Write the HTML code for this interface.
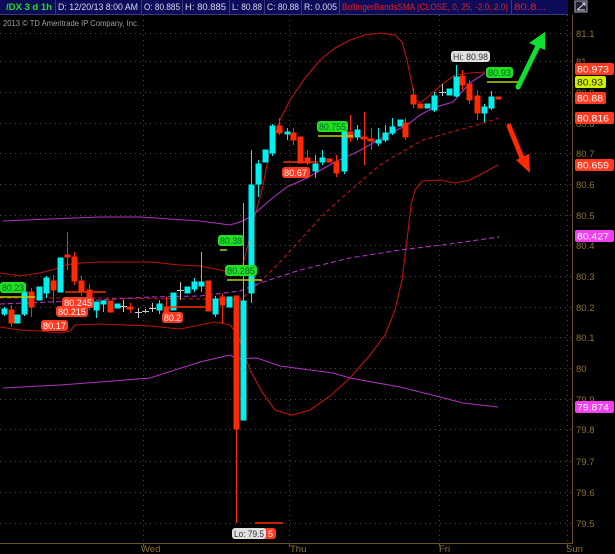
<!DOCTYPE html>
<html><head><meta charset="utf-8"><style>
html,body{margin:0;padding:0;background:#000;}
body{width:615px;height:554px;overflow:hidden;position:relative;font-family:"Liberation Sans",sans-serif;}
svg{position:absolute;left:0;top:0;}
</style></head><body>
<svg width="615" height="554" viewBox="0 0 615 554" xmlns="http://www.w3.org/2000/svg" font-family="Liberation Sans, sans-serif">
<rect width="615" height="554" fill="#000"/>
<!-- top bar -->
<rect x="0" y="0" width="568" height="14" fill="#0c0c5a"/>
<g stroke="#3a3a7a" stroke-width="1">
<line x1="55.5" y1="0" x2="55.5" y2="14"/><line x1="141.5" y1="0" x2="141.5" y2="14"/><line x1="182.5" y1="0" x2="182.5" y2="14"/><line x1="229.5" y1="0" x2="229.5" y2="14"/><line x1="264.5" y1="0" x2="264.5" y2="14"/><line x1="301.5" y1="0" x2="301.5" y2="14"/><line x1="339.5" y1="0" x2="339.5" y2="14"/><line x1="511.5" y1="0" x2="511.5" y2="14"/><line x1="0" y1="14.5" x2="568" y2="14.5"/>
</g>
<g font-size="9" fill="#d8d8e8" lengthAdjust="spacingAndGlyphs">
<text x="6" y="10" fill="#20e020" font-weight="bold" textLength="46" lengthAdjust="spacingAndGlyphs">/DX 3 d 1h</text>
<text x="58" y="10" textLength="80" lengthAdjust="spacingAndGlyphs">D: 12/20/13 8:00 AM</text>
<text x="144" y="10" textLength="36" lengthAdjust="spacingAndGlyphs">O: 80.885</text>
<text x="185" y="10" textLength="41" lengthAdjust="spacingAndGlyphs">H: 80.885</text>
<text x="232" y="10" textLength="30" lengthAdjust="spacingAndGlyphs">L: 80.88</text>
<text x="267" y="10" textLength="32" lengthAdjust="spacingAndGlyphs">C: 80.88</text>
<text x="304" y="10" textLength="33" lengthAdjust="spacingAndGlyphs">R: 0.005</text>
<text x="342" y="10" fill="#e02020" textLength="166" lengthAdjust="spacingAndGlyphs">BollingerBandsSMA (CLOSE, 0, 25, -2.0, 2.0)</text>
<text x="514" y="10" fill="#e02020" textLength="32" lengthAdjust="spacingAndGlyphs">80.8...</text>
</g>
<rect x="575" y="1" width="12" height="11" fill="#223" stroke="#aab" stroke-width="1"/>
<path d="M577 10 L585 3 M582 3 H585 V6 M577 10 H585" stroke="#dde" fill="none"/>
<text x="3" y="26" font-size="8.5" fill="#a0a0a0" textLength="136" lengthAdjust="spacingAndGlyphs">2013 © TD Ameritrade IP Company, Inc.</text>
<!-- grid -->
<g stroke="#5a4a1e" stroke-width="1" stroke-dasharray="1,4">
<line x1="0" y1="33.5" x2="571" y2="33.5"/><line x1="0" y1="61.5" x2="571" y2="61.5"/><line x1="0" y1="92.5" x2="571" y2="92.5"/><line x1="0" y1="123.5" x2="571" y2="123.5"/><line x1="0" y1="153.5" x2="571" y2="153.5"/><line x1="0" y1="184.5" x2="571" y2="184.5"/><line x1="0" y1="215.5" x2="571" y2="215.5"/><line x1="0" y1="245.5" x2="571" y2="245.5"/><line x1="0" y1="276.5" x2="571" y2="276.5"/><line x1="0" y1="307.5" x2="571" y2="307.5"/><line x1="0" y1="337.5" x2="571" y2="337.5"/><line x1="0" y1="368.5" x2="571" y2="368.5"/><line x1="0" y1="399.5" x2="571" y2="399.5"/><line x1="0" y1="429.5" x2="571" y2="429.5"/><line x1="0" y1="461.5" x2="571" y2="461.5"/><line x1="0" y1="492.5" x2="571" y2="492.5"/><line x1="0" y1="523.5" x2="571" y2="523.5"/>
<line x1="143.5" y1="15" x2="143.5" y2="543"/><line x1="289.5" y1="15" x2="289.5" y2="543"/><line x1="439.5" y1="15" x2="439.5" y2="543"/><line x1="567.5" y1="15" x2="567.5" y2="543"/>
</g>
<g stroke="#6a5220" stroke-width="1">
<line x1="572.5" y1="15" x2="572.5" y2="544"/><line x1="0" y1="543.5" x2="572" y2="543.5"/>
<line x1="143.5" y1="543" x2="143.5" y2="547"/><line x1="289.5" y1="543" x2="289.5" y2="547"/><line x1="439.5" y1="543" x2="439.5" y2="547"/><line x1="567.5" y1="543" x2="567.5" y2="547"/>
</g>
<g font-size="9.5" fill="#8e7234">
<text x="576" y="37">81.1</text><text x="576" y="65">81</text><text x="576" y="96">80.9</text><text x="576" y="127">80.8</text><text x="576" y="157">80.7</text><text x="576" y="188">80.6</text><text x="576" y="219">80.5</text><text x="576" y="249">80.4</text><text x="576" y="280">80.3</text><text x="576" y="311">80.2</text><text x="576" y="341">80.1</text><text x="576" y="372">80</text><text x="576" y="403">79.9</text><text x="576" y="433">79.8</text><text x="576" y="465">79.7</text><text x="576" y="496">79.6</text><text x="576" y="527">79.5</text>
<text x="141" y="552">Wed</text><text x="290" y="552">Thu</text><text x="439" y="552">Fri</text><text x="566" y="552">Sun</text>
</g>
<!-- bands -->
<g fill="none" stroke-width="1.1">
<polyline stroke="#c01010" points="0,273 20,276 40,273 55,269 65,265 80,263 100,262 150,262 180,265 200,266 220,270 240,275 248,245 255,215 262,190 270,150 280,120 290,100 305,78 320,60 335,48 350,40 365,35 380,33 395,35 402,42 407,60 411,80 415,100 420,103 430,95 445,82 455,75 470,73 485,72"/>
<polyline stroke="#c01010" points="0,327 20,330 40,331 60,333 70,331 75,325 100,324 150,326 180,329 200,325 215,322 230,325 238,335 250,370 262,392 275,410 292,415 310,410 330,396 350,378 370,355 385,335 395,310 402,280 407,240 411,205 415,190 422,181 440,180 455,183 470,180 485,172 498,165"/>
<polyline stroke="#c01010" stroke-dasharray="4,3" points="0,298 100,298 200,299 240,300 260,282 280,262 300,240 323,215 345,195 360,182 380,165 393,157 407,149 423,140 440,135 470,127 490,121 499,118"/>
<polyline stroke="#b030c0" points="3,221 50,219 100,217 140,217 200,221 230,225 243,221 253,215 270,200 287,187 307,178 333,163 357,152 387,135 407,125 420,115 433,108 453,102 470,83 485,73"/>
<polyline stroke="#b030c0" stroke-dasharray="5,3" points="0,304 100,300 150,297 200,296 240,291 260,283 300,270 350,258 400,250 450,244 499,237"/>
<polyline stroke="#b030c0" points="3,388 60,385 100,382 150,378 200,362 230,355 237,359 257,358 280,366 333,373 350,378 400,387 440,397 463,403 498,407"/>
</g>
<!-- candles -->
<g stroke-width="1">
<g fill="#00f0f0" stroke="#00f0f0">
<line x1="4.5" y1="307" x2="4.5" y2="316"/><rect x="2" y="309" width="5" height="5"/>
<rect x="15" y="315" width="5" height="8"/>
<line x1="24.5" y1="290" x2="24.5" y2="316"/><rect x="22" y="292" width="5" height="22"/>
<rect x="37" y="287" width="5" height="13"/>
<line x1="46.5" y1="276" x2="46.5" y2="298"/><rect x="44" y="278" width="5" height="15"/>
<rect x="58" y="258" width="5" height="34"/>
<line x1="96.5" y1="302" x2="96.5" y2="318"/><rect x="94" y="302" width="5" height="8"/>
<line x1="103.5" y1="300" x2="103.5" y2="312"/><rect x="101" y="301" width="5" height="3"/>
<rect x="115" y="304" width="5" height="4"/>
<line x1="159.5" y1="300" x2="159.5" y2="314"/><rect x="157" y="304" width="5" height="6"/>
<rect x="171" y="293" width="5" height="17"/>
<rect x="185" y="287" width="5" height="6"/>
<line x1="194.5" y1="278" x2="194.5" y2="292"/><rect x="192" y="282" width="5" height="7"/>
<line x1="201.5" y1="252" x2="201.5" y2="292"/><rect x="199" y="282" width="5" height="4"/>
<line x1="215.5" y1="296" x2="215.5" y2="317"/><rect x="213" y="299" width="5" height="15"/>
<rect x="227" y="297" width="5" height="10"/>
<line x1="243.5" y1="203" x2="243.5" y2="420"/><rect x="241" y="301" width="5" height="119"/>
<line x1="251.5" y1="150" x2="251.5" y2="303"/><rect x="249" y="185" width="5" height="108"/>
<line x1="258.5" y1="160" x2="258.5" y2="197"/><rect x="256" y="164" width="5" height="20"/>
<rect x="263" y="150" width="5" height="12"/>
<line x1="272.5" y1="124" x2="272.5" y2="156"/><rect x="270" y="126" width="5" height="27"/>
<line x1="287.5" y1="128" x2="287.5" y2="140"/><rect x="285" y="132" width="5" height="2"/>
<line x1="315.5" y1="155" x2="315.5" y2="178"/><rect x="313" y="164" width="5" height="7"/>
<line x1="322.5" y1="150" x2="322.5" y2="165"/><rect x="320" y="158" width="5" height="4"/>
<line x1="344.5" y1="125" x2="344.5" y2="174"/><rect x="342" y="132" width="5" height="39"/>
<line x1="357.5" y1="125" x2="357.5" y2="140"/><rect x="355" y="130" width="5" height="7"/>
<line x1="378.5" y1="128" x2="378.5" y2="146"/><rect x="376" y="140" width="5" height="3"/>
<line x1="385.5" y1="125" x2="385.5" y2="142"/><rect x="383" y="133" width="5" height="7"/>
<line x1="392.5" y1="118" x2="392.5" y2="135"/><rect x="390" y="127" width="5" height="6"/>
<rect x="398" y="120" width="5" height="6"/>
<rect x="425" y="104" width="5" height="4"/>
<line x1="434.5" y1="92" x2="434.5" y2="112"/><rect x="432" y="96" width="5" height="14"/>
<rect x="447" y="89" width="5" height="6"/>
<line x1="456.5" y1="65" x2="456.5" y2="97"/><rect x="454" y="77" width="5" height="19"/>
<line x1="484.5" y1="104" x2="484.5" y2="122"/><rect x="482" y="107" width="5" height="6"/>
<line x1="491.5" y1="91" x2="491.5" y2="110"/><rect x="489" y="97" width="5" height="11"/>
</g>
<g fill="#ff2a00" stroke="#ff2a00">
<line x1="11.5" y1="305" x2="11.5" y2="327"/><rect x="9" y="310" width="5" height="13"/>
<line x1="31.5" y1="288" x2="31.5" y2="317"/><rect x="29" y="292" width="5" height="15"/>
<line x1="53.5" y1="275" x2="53.5" y2="303"/><rect x="51" y="281" width="5" height="9"/>
<line x1="67.5" y1="232" x2="67.5" y2="270"/><rect x="65" y="255" width="5" height="2"/>
<line x1="74.5" y1="252" x2="74.5" y2="285"/><rect x="72" y="257" width="5" height="24"/>
<line x1="81.5" y1="276" x2="81.5" y2="296"/><rect x="79" y="281" width="5" height="11"/>
<line x1="89.5" y1="284" x2="89.5" y2="310"/><rect x="87" y="290" width="5" height="13"/>
<rect x="108" y="301" width="5" height="11"/>
<line x1="130.5" y1="303" x2="130.5" y2="313"/><rect x="127" y="307" width="6" height="2"/>
<line x1="166.5" y1="297" x2="166.5" y2="317"/><rect x="164" y="307" width="5" height="8"/>
<rect x="206" y="281" width="5" height="30"/>
<line x1="222.5" y1="294" x2="222.5" y2="323"/><rect x="220" y="297" width="5" height="8"/>
<line x1="236.5" y1="296" x2="236.5" y2="523"/><rect x="234" y="296" width="5" height="133"/>
<line x1="279.5" y1="118" x2="279.5" y2="135"/><rect x="277" y="126" width="5" height="7"/>
<line x1="293.5" y1="128" x2="293.5" y2="145"/><rect x="291" y="133" width="5" height="7"/>
<rect x="298" y="137" width="5" height="26"/>
<line x1="307.5" y1="150" x2="307.5" y2="165"/><rect x="305" y="158" width="5" height="5"/>
<rect x="327" y="159" width="5" height="3"/>
<line x1="336.5" y1="155" x2="336.5" y2="177"/><rect x="334" y="162" width="5" height="11"/>
<line x1="350.5" y1="115" x2="350.5" y2="142"/><rect x="348" y="132" width="5" height="6"/>
<line x1="364.5" y1="112" x2="364.5" y2="165"/><rect x="361" y="137" width="6" height="2"/>
<line x1="371.5" y1="128" x2="371.5" y2="150"/><rect x="368" y="139" width="6" height="2"/>
<line x1="405.5" y1="118" x2="405.5" y2="140"/><rect x="403" y="123" width="5" height="14"/>
<line x1="413.5" y1="88" x2="413.5" y2="108"/><rect x="411" y="95" width="5" height="9"/>
<rect x="418" y="104" width="5" height="4"/>
<line x1="462.5" y1="70" x2="462.5" y2="90"/><rect x="460" y="76" width="5" height="9"/>
<line x1="469.5" y1="80" x2="469.5" y2="104"/><rect x="467" y="84" width="5" height="16"/>
<line x1="477.5" y1="90" x2="477.5" y2="120"/><rect x="475" y="96" width="5" height="17"/>
<rect x="496" y="97" width="5" height="2"/>
</g>
<g stroke="#c8c8c8" fill="#c8c8c8">
<line x1="123.5" y1="300" x2="123.5" y2="312"/><line x1="120" y1="306.5" x2="127" y2="306.5"/>
<line x1="138.5" y1="308" x2="138.5" y2="318"/><line x1="135" y1="312.5" x2="142" y2="312.5"/>
<line x1="145.5" y1="309" x2="145.5" y2="313"/><line x1="142" y1="311.5" x2="149" y2="311.5"/>
<line x1="152.5" y1="303" x2="152.5" y2="312"/><line x1="149" y1="308.5" x2="156" y2="308.5"/>
<line x1="180.5" y1="282" x2="180.5" y2="300"/><line x1="177" y1="290.5" x2="184" y2="290.5"/>
<line x1="442.5" y1="84" x2="442.5" y2="96"/><line x1="439" y1="92.5" x2="446" y2="92.5"/>
</g>
</g>
<!-- level lines -->
<g stroke-width="1.5">
<line x1="487" y1="82" x2="523" y2="82" stroke="#b8d000"/>
<line x1="318" y1="136" x2="353" y2="136" stroke="#b8d000"/>
<line x1="220" y1="250" x2="227" y2="250" stroke="#b8d000"/>
<line x1="227" y1="280" x2="262" y2="280" stroke="#b8d000"/>
<line x1="0" y1="297" x2="35" y2="297" stroke="#b8d000"/>
<line x1="283" y1="162" x2="318" y2="162" stroke="#ff2a00"/>
<line x1="165" y1="307" x2="205" y2="307" stroke="#ff2a00"/>
<line x1="65" y1="292" x2="106" y2="292" stroke="#ff2a00"/>
<line x1="255" y1="523" x2="283" y2="523" stroke="#ff2a00"/>
</g>
<!-- bubbles -->
<g font-size="9">
<rect x="451" y="51" width="39" height="11" rx="3" fill="#e0e0e0"/><text x="453" y="60" fill="#333" textLength="35" lengthAdjust="spacingAndGlyphs">Hi: 80.98</text>
<rect x="486" y="67" width="27" height="11" rx="3" fill="#20e020"/><text x="488" y="76" fill="#063" textLength="23" lengthAdjust="spacingAndGlyphs">80.93</text>
<rect x="317" y="121" width="31" height="11" rx="3" fill="#20e020"/><text x="319" y="130" fill="#063" textLength="27" lengthAdjust="spacingAndGlyphs">80.755</text>
<rect x="282" y="167" width="28" height="11" rx="3" fill="#ff3a20"/><text x="284" y="176" fill="#fff" textLength="23" lengthAdjust="spacingAndGlyphs">80.67</text>
<rect x="218" y="235" width="26" height="11" rx="3" fill="#20e020"/><text x="220" y="244" fill="#063" textLength="22" lengthAdjust="spacingAndGlyphs">80.38</text>
<rect x="225" y="265" width="32" height="11" rx="3" fill="#20e020"/><text x="227" y="274" fill="#063" textLength="28" lengthAdjust="spacingAndGlyphs">80.285</text>
<rect x="0" y="282" width="26" height="11" rx="3" fill="#20e020"/><text x="2" y="291" fill="#063" textLength="22" lengthAdjust="spacingAndGlyphs">80.23</text>
<rect x="62" y="297" width="32" height="11" rx="3" fill="#ff3a20"/><text x="64" y="306" fill="#fff" textLength="28" lengthAdjust="spacingAndGlyphs">80.245</text>
<rect x="56" y="306" width="32" height="11" rx="3" fill="#ff3a20"/><text x="58" y="315" fill="#fff" textLength="28" lengthAdjust="spacingAndGlyphs">80.215</text>
<rect x="41" y="320" width="27" height="11" rx="3" fill="#ff3a20"/><text x="43" y="329" fill="#fff" textLength="23" lengthAdjust="spacingAndGlyphs">80.17</text>
<rect x="162" y="312" width="21" height="11" rx="3" fill="#ff3a20"/><text x="164" y="321" fill="#fff" textLength="17" lengthAdjust="spacingAndGlyphs">80.2</text>
<rect x="258" y="528" width="18" height="11" rx="3" fill="#ff3a20"/><text x="268" y="537" fill="#fff">5</text>
<rect x="232" y="528" width="34" height="11" rx="3" fill="#e0e0e0"/><text x="234" y="537" fill="#333" textLength="30" lengthAdjust="spacingAndGlyphs">Lo: 79.5</text>
<!-- axis labels -->
<rect x="575" y="63" width="39" height="12" rx="2" fill="#ff3a20"/><text x="577" y="72.5" fill="#fff" textLength="32" lengthAdjust="spacingAndGlyphs">80.973</text>
<rect x="575" y="76" width="31" height="12" rx="2" fill="#d0f000"/><text x="577" y="85.5" fill="#222" textLength="26" lengthAdjust="spacingAndGlyphs">80.93</text>
<rect x="575" y="92" width="31" height="12" rx="2" fill="#ff3a20"/><text x="577" y="101.5" fill="#fff" textLength="26" lengthAdjust="spacingAndGlyphs">80.88</text>
<rect x="575" y="112" width="39" height="12" rx="2" fill="#ff3a20"/><text x="577" y="121.5" fill="#fff" textLength="32" lengthAdjust="spacingAndGlyphs">80.816</text>
<rect x="575" y="159" width="39" height="12" rx="2" fill="#ff3a20"/><text x="577" y="168.5" fill="#fff" textLength="32" lengthAdjust="spacingAndGlyphs">80.659</text>
<rect x="575" y="230" width="39" height="12" rx="2" fill="#f040f0"/><text x="577" y="239.5" fill="#fff" textLength="32" lengthAdjust="spacingAndGlyphs">80.427</text>
<rect x="575" y="401" width="39" height="12" rx="2" fill="#f040f0"/><text x="577" y="410.5" fill="#fff" textLength="32" lengthAdjust="spacingAndGlyphs">79.874</text>
</g>
<!-- arrows -->
<line x1="518" y1="87" x2="538" y2="46" stroke="#10e030" stroke-width="5" stroke-linecap="round"/>
<polygon points="545,32 545,50 529,43" fill="#10e030"/>
<line x1="509" y1="126" x2="522" y2="158" stroke="#ff2a00" stroke-width="5" stroke-linecap="round"/>
<polygon points="530,173 516,160 529,154" fill="#ff2a00"/>
</svg>
</body></html>
